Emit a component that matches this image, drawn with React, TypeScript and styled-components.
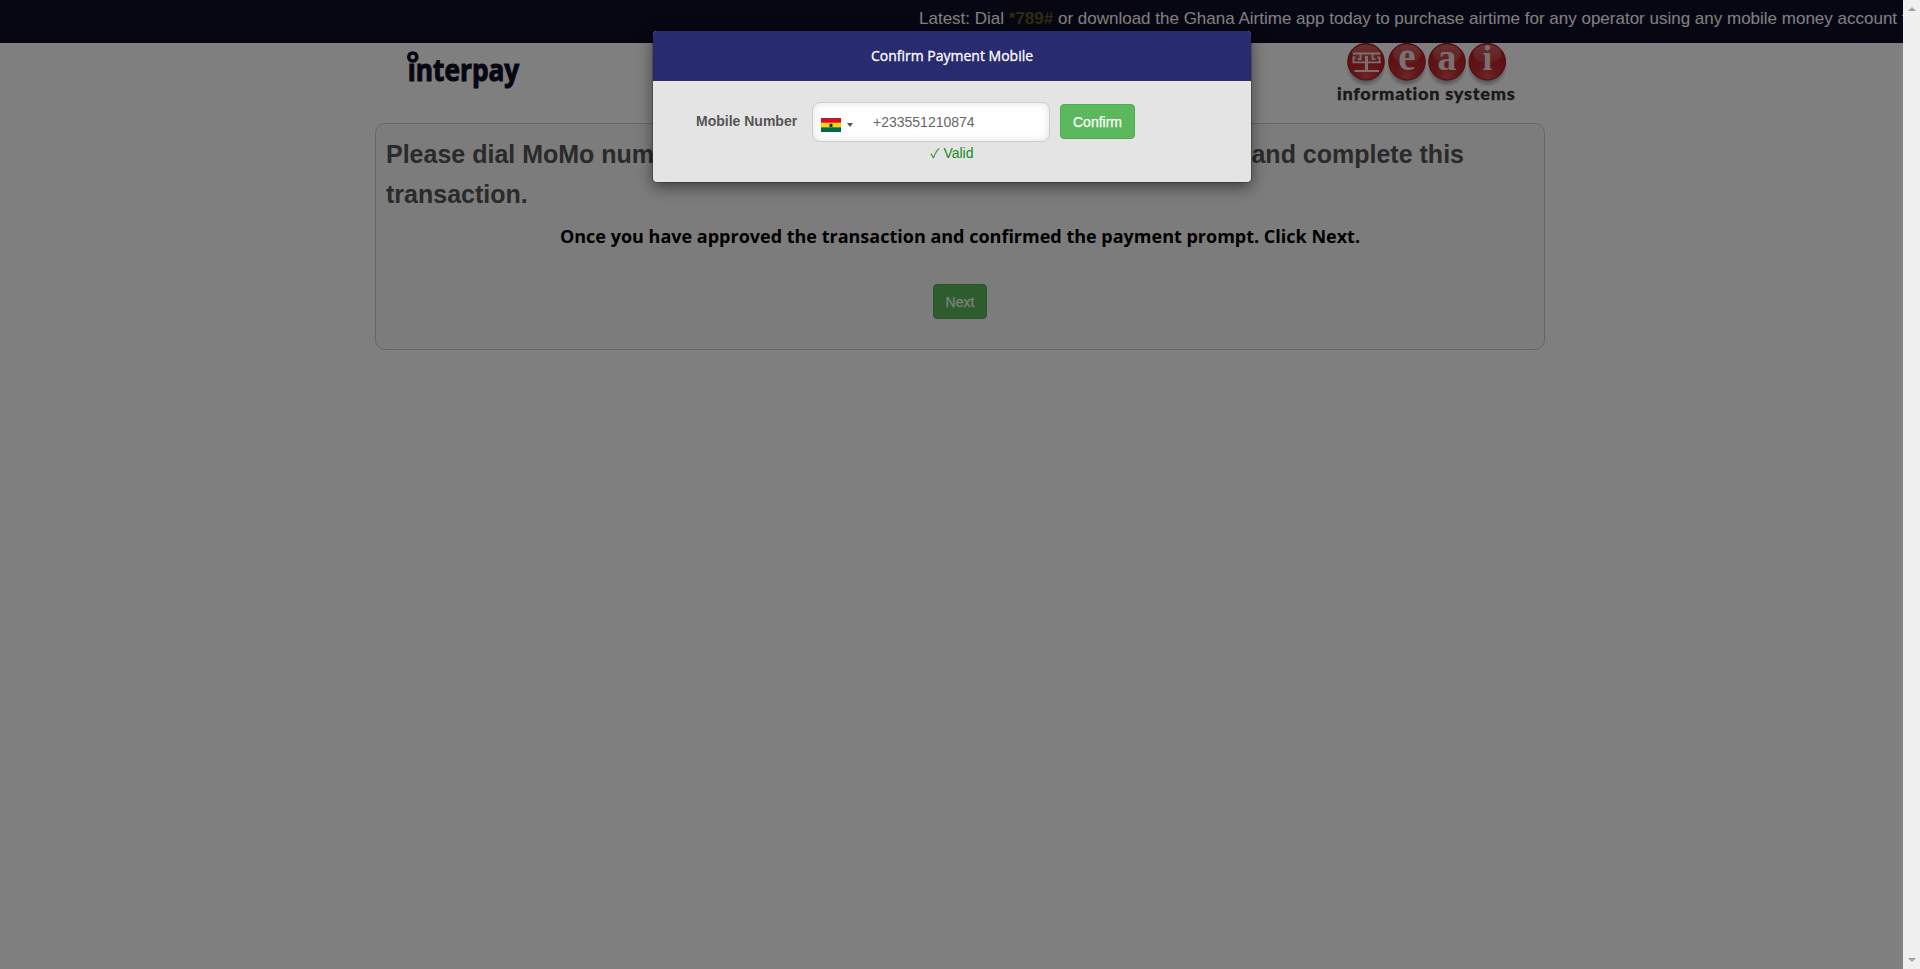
import React from "react";
import styled, { createGlobalStyle } from "styled-components";

const Global = createGlobalStyle`
  * { box-sizing: border-box; }
  html, body { margin: 0; padding: 0; height: 100%; overflow: hidden; background: #fff; }
  body { font-family: "Liberation Sans", Arial, sans-serif; font-size: 14px; }
`;

const Page = styled.div`
  position: relative;
  width: 100%;
  height: 969px;
  overflow: hidden;
`;

const TopBar = styled.div`
  height: 43px;
  padding: 9px 17px 0 919px;
  overflow: hidden;
  background: #0f0e26;
  color: #fff;
  font-size: 17px;
  line-height: 20px;
  white-space: nowrap;
`;

const ShortCode = styled.b`
  color: #5a5a1e;
`;

const Container = styled.div`
  width: 1170px;
  margin: 0 auto;
`;

const LogoRow = styled.header`
  display: flex;
  justify-content: space-between;
  height: 80px;
  padding: 0 28px 0 30px;
`;

const Logo = styled.svg`
  overflow: visible;
`;

const Panel = styled.section`
  height: 227px;
  padding: 10px;
  border: 1px solid #ccc;
  border-radius: 10px;
  background: #f8f8f8;
  text-align: center;
`;

const Instruction = styled.h2`
  margin: 0;
  color: #555;
  font-size: 25px;
  line-height: 40px;
  text-align: left;
`;

const InstructionLine = styled.span`
  display: flex;
  justify-content: space-between;
  width: 1078px;
`;

const Notice = styled.p`
  margin: 0 0 26px;
  color: #000;
  font: 700 18px/44px "Open Sans", sans-serif;
`;

const Button = styled.button<{ $width: number }>`
  width: ${(p) => p.$width}px;
  height: 35px;
  padding: 0;
  border: 1px solid #4cae4c;
  border-radius: 4px;
  background: #5cb85c;
  color: #fff;
  font: 14px "Liberation Sans", Arial, sans-serif;
  -webkit-text-stroke: 0.25px #fff;
`;

const Overlay = styled.div`
  position: absolute;
  inset: 0 17px 0 0;
  display: flex;
  justify-content: center;
  align-items: flex-start;
  padding-top: 31px;
  background: rgba(0, 0, 0, 0.5);
`;

const Dialog = styled.div`
  width: 598px;
  height: 151px;
  margin-left: 1px;
  border-radius: 4px;
  background: #e4e4e4;
  box-shadow: 0 0 0 1px rgba(0, 0, 0, 0.2), 0 5px 15px rgba(0, 0, 0, 0.5);
`;

const DialogTitle = styled.div`
  height: 50px;
  border-radius: 4px 4px 0 0;
  background: #292b70;
  color: #fff;
  font: 500 14px/50px "Open Sans", sans-serif;
  -webkit-text-stroke: 0.3px #fff;
  text-align: center;
`;

const FormRow = styled.div`
  display: flex;
  align-items: flex-start;
  height: 61px;
  padding: 21px 0 0 43px;
`;

const Label = styled.label`
  width: 116px;
  padding-top: 10px;
  color: #555;
  font-weight: bold;
  line-height: 18px;
`;

const PhoneBox = styled.div`
  display: flex;
  align-items: center;
  width: 238px;
  height: 40px;
  margin-right: 10px;
  padding-left: 8px;
  border: 1px solid #ccc;
  border-radius: 8px;
  background: #fff;
  box-shadow: inset 0 0 8px rgba(0, 0, 0, 0.12);
  color: #666;
`;

const Flag = styled.svg`
  margin: 5px 6px 0 0;
`;

const Caret = styled.i`
  margin: 5px 20px 0 0;
  border: 3px solid transparent;
  border-top: 4px solid #555;
  border-bottom: 0;
`;

const Valid = styled.div`
  display: flex;
  justify-content: center;
  gap: 4px;
  height: 22px;
  padding-top: 1px;
  color: #228b22;
  line-height: 20px;
`;

const Tick = styled.span`
  font-family: "Noto Sans CJK SC", sans-serif;
  font-size: 13px;
`;

const ConfirmSlot = styled.div`
  padding-top: 2px;
`;

const ScrollTrack = styled.aside`
  position: absolute;
  inset: 0 0 0 auto;
  display: flex;
  flex-direction: column;
  justify-content: space-between;
  align-items: center;
  width: 17px;
  padding: 7px 0;
  background: #f0f0f0;
`;

const InterpayLogo = () => (
  <Logo width="120" height="60" viewBox="405 43 120 60">
    <text x="407.8" y="80.5" fontFamily="Open Sans" fontWeight="700" fontSize="31" textLength="111.5" lengthAdjust="spacingAndGlyphs" fill="#0f0e26" stroke="#0f0e26" strokeWidth="1.1">interpay</text>
    <rect x="405" y="50" width="14" height="13" fill="#fff" />
    <circle cx="412.8" cy="57" r="4.1" fill="#fff" stroke="#0f0e26" strokeWidth="3.5" />
  </Logo>
);

const BALLS = [
  { x: 1366, glyph: "", size: 0 },
  { x: 1407, glyph: "e", size: 39 },
  { x: 1447, glyph: "a", size: 38 },
  { x: 1487.3, glyph: "i", size: 35 },
];

const EaiLogo = () => (
  <Logo width="182" height="70" viewBox="1335 43 182 70">
    <defs>
      <radialGradient id="ball" cx="50%" cy="90%" r="85%">
        <stop offset="0" stopColor="#dc4a4a" />
        <stop offset="0.4" stopColor="#c02a2c" />
        <stop offset="1" stopColor="#b81c20" />
      </radialGradient>
      <linearGradient id="gloss" x1="0" y1="0" x2="0" y2="1">
        <stop offset="0" stopColor="#fff" stopOpacity="0.32" />
        <stop offset="1" stopColor="#fff" stopOpacity="0.08" />
      </linearGradient>
      <radialGradient id="shade">
        <stop offset="0.5" stopColor="#000" stopOpacity="0.5" />
        <stop offset="1" stopColor="#000" stopOpacity="0" />
      </radialGradient>
    </defs>
    {BALLS.map((b) => (
      <g key={b.x}>
        <ellipse cx={b.x} cy="68" rx="20" ry="19" fill="url(#shade)" />
        <circle cx={b.x} cy="61.7" r="18.3" fill="url(#ball)" stroke="#a81418" strokeWidth="1" />
        <ellipse cx={b.x} cy="54" rx="14" ry="9.5" fill="url(#gloss)" />
        {b.glyph && (
          <text x={b.x} y="70.3" textAnchor="middle" fontFamily="Liberation Serif" fontWeight="700" fontSize={b.size} fill="#f4e0e0">{b.glyph}</text>
        )}
      </g>
    ))}
    <path d="M1353 53.5h27.500M1352.500 62.300h28.500M1354.500 71h24.500M1353.500 57v5M1379.500 57v5M1352.500 57.300h3M1377.500 57.300h3M1360.500 54v5.200h-3M1372.500 54v5.200h3" fill="none" stroke="#f4e0e0" strokeWidth="1.8" />
    <path d="M1366.500 56v15" stroke="#f4e0e0" strokeWidth="3" />
    <text x="1337" y="100" fontFamily="Lato" fontWeight="900" fontSize="17.5" textLength="178.5" lengthAdjust="spacingAndGlyphs" letterSpacing="0.7" fill="#333" stroke="#333" strokeWidth="0.3">information systems</text>
  </Logo>
);

export default function App() {
  return (
    <Page>
      <Global />
      <TopBar>
        Latest: Dial <ShortCode>*789#</ShortCode> or download the Ghana Airtime app today to purchase airtime for any operator using any mobile money account from
      </TopBar>
      <Container>
        <LogoRow>
          <InterpayLogo />
          <EaiLogo />
        </LogoRow>
        <Panel>
          <Instruction>
            <InstructionLine>
              <span>Please dial MoMo number</span>
              <span>and complete this</span>
            </InstructionLine>
            transaction.
          </Instruction>
          <Notice>Once you have approved the transaction and confirmed the payment prompt. Click Next.</Notice>
          <Button $width={54}>Next</Button>
        </Panel>
      </Container>
      <Overlay>
        <Dialog>
          <DialogTitle>Confirm Payment Mobile</DialogTitle>
          <FormRow>
            <Label>Mobile Number</Label>
            <PhoneBox>
              <Flag width="20" height="14" viewBox="0 0 20 14">
                <rect width="20" height="5" fill="#ce1126" />
                <rect y="4.67" width="20" height="5" fill="#fcd116" />
                <rect y="9.33" width="20" height="4.67" fill="#006b3f" />
                <path d="M10 4.7l.7 1.7h1.7l-1.3 1.2.6 1.8-1.7-1-1.7 1 .6-1.8-1.3-1.2h1.7z" fill="#111" />
              </Flag>
              <Caret />
              +233551210874
            </PhoneBox>
            <ConfirmSlot>
              <Button $width={75}>Confirm</Button>
            </ConfirmSlot>
          </FormRow>
          <Valid>
            <Tick>✓</Tick>
            <span>Valid</span>
          </Valid>
        </Dialog>
      </Overlay>
      <ScrollTrack>
        <svg width="8" height="4"><path d="M4 0l4 4H0z" fill="#a3a3a3" /></svg>
        <svg width="8" height="4"><path d="M0 0h8L4 4z" fill="#a3a3a3" /></svg>
      </ScrollTrack>
    </Page>
  );
}
